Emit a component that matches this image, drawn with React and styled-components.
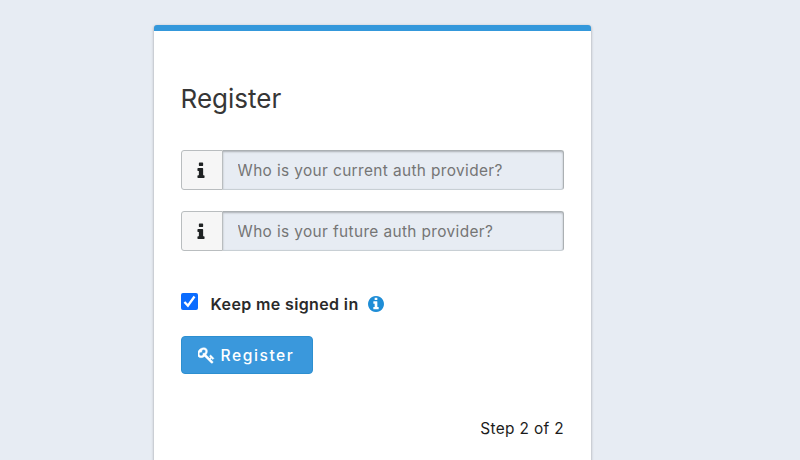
import React from "react";
import styled, { createGlobalStyle } from "styled-components";

const GlobalStyle = createGlobalStyle`
  * { box-sizing: border-box; }
  body {
    margin: 0;
    background: #e7ecf3;
    font-family: Inter, "Liberation Sans", sans-serif;
    color: #1c1c1c;
  }
`;

const Page = styled.main`
  height: 460px;
  overflow: hidden;
  padding: 24.5px 209px 0 153.6px;
`;

const Card = styled.form`
  height: 500px;
  padding: 48px 27px 0;
  background: #fff;
  border-top: 6.5px solid #3498db;
  border-radius: 3px 3px 0 0;
  box-shadow: 0 1px 3px rgba(0, 0, 0, 0.35);
`;

const Title = styled.h1`
  margin: 0 0 31px;
  font-size: 26px;
  line-height: 40px;
  font-weight: 400;
  letter-spacing: 0;
  color: #363636;
`;

const InputGroup = styled.div`
  display: flex;
  width: 383px;
  height: 40.5px;
  margin-bottom: ${(p) => p.$gap}px;
`;

const Addon = styled.span`
  display: flex;
  align-items: center;
  justify-content: center;
  width: 42px;
  padding-right: 1px;
  background: #f6f6f6;
  border: 1px solid #b9bdbf;
  border-radius: 3px 0 0 3px;
  color: #1f2223;
`;

const Input = styled.input`
  flex: 1;
  min-width: 0;
  padding: 1px 15px 0;
  border: 1px solid #c8cfd4;
  border-left: 0;
  border-top-color: #abb0b3;
  border-right-color: #abb0b3;
  border-radius: 0 3px 3px 0;
  background: #e7ecf3;
  box-shadow: inset 0 1px 2px rgba(0, 0, 0, 0.25);
  font: 400 15.4px Inter, "Liberation Sans", sans-serif;
  letter-spacing: 0.38px;
  &::placeholder { color: #757575; opacity: 1; }
`;

const CheckRow = styled.div`
  display: flex;
  align-items: center;
  height: 24px;
  margin-bottom: 20px;
`;

const CheckLabel = styled.label`
  display: flex;
  align-items: center;
  gap: 13px;
  margin-right: 9px;
  font-size: 16px;
  font-weight: 600;
  letter-spacing: 0.37px;
  color: #2a2a2a;
  white-space: nowrap;
`;

const HiddenCheckbox = styled.input`
  appearance: none;
  display: none;
`;

const CheckBox = styled.span`
  display: flex;
  width: 17px;
  height: 17px;
  margin-bottom: 5px;
  border-radius: 2px;
  background: #0a6cff;
`;

const Button = styled.button`
  display: flex;
  align-items: center;
  gap: 6px;
  width: 132px;
  height: 38px;
  padding: 0 16px;
  border: 1px solid #2d8fd0;
  border-radius: 4px;
  background: #3a98dc;
  color: #fff;
  font: 500 15.6px Inter, "Liberation Sans", sans-serif;
  letter-spacing: 1.55px;
`;

const Step = styled.div`
  margin-top: 44px;
  text-align: right;
  font-size: 15.4px;
  line-height: 22px;
  letter-spacing: 0.36px;
`;

const Glyph = styled.svg`
  display: block;
  flex: none;
  fill: currentColor;
  color: ${(p) => p.$color || "inherit"};
`;

const InfoIcon = () => (
  <Glyph width="8" height="18.5" viewBox="0 0 640 1664">
    <path d="M640 1344v128q0 26-19 45t-45 19h-512q-26 0-45-19t-19-45v-128q0-26 19-45t45-19h64v-384h-64q-26 0-45-19t-19-45v-128q0-26 19-45t45-19h384q26 0 45 19t19 45v576h64q26 0 45 19t19 45zM512 192v192q0 26-19 45t-45 19h-256q-26 0-45-19t-19-45v-192q0-26 19-45t45-19h256q26 0 45 19t19 45z" />
  </Glyph>
);

const InfoCircleIcon = () => (
  <Glyph width="16" height="16" viewBox="128 128 1536 1536" $color="#1f8dd6">
    <path d="M1152 1376v-160q0-14-9-23t-23-9h-96v-512q0-14-9-23t-23-9h-320q-14 0-23 9t-9 23v160q0 14 9 23t23 9h96v320h-96q-14 0-23 9t-9 23v160q0 14 9 23t23 9h448q14 0 23-9t9-23zm-128-896v-160q0-14-9-23t-23-9h-192q-14 0-23 9t-9 23v160q0 14 9 23t23 9h192q14 0 23-9t9-23zm640 416q0 209-103 385.5t-279.5 279.5-385.5 103-385.5-103-279.5-279.5-103-385.5 103-385.5 279.5-279.5 385.5-103 385.5 103 279.5 279.5 103 385.5z" />
  </Glyph>
);

const KeyIcon = () => (
  <Glyph width="17" height="17" viewBox="64 64 1728 1728" stroke="currentColor" strokeWidth="40">
    <path d="M832 512q0-80-56-136t-136-56-136 56-56 136q0 42 19 83-41-19-83-19-80 0-136 56t-56 136 56 136 136 56 136-56 56-136q0-42-19-83 41 19 83 19 80 0 136-56t56-136zm851 704q0 17-49 66t-66 49q-9 0-28.5-16t-36.5-33-38.5-40-24.5-26l-96 96 220 220q28 28 28 68 0 42-39 81t-81 39q-40 0-68-28l-671-671q-176 131-365 131-163 0-265.5-102.5t-102.5-265.5q0-160 95-313t248-248 313-95q163 0 265.5 102.5t102.5 265.5q0 189-131 365l355 355 96-96q-3-3-26-24.5t-40-38.5-33-36.5-16-28.5q0-17 49-66t66-49q13 0 23 10 6 6 46 44.5t82 79.5 86.5 86 73 78 28.5 41z" />
  </Glyph>
);

const Field = ({ placeholder, gap }) => (
  <InputGroup $gap={gap}>
    <Addon><InfoIcon /></Addon>
    <Input type="text" placeholder={placeholder} />
  </InputGroup>
);

export default function App() {
  return (
    <>
      <GlobalStyle />
      <Page>
        <Card>
          <Title>Register</Title>
          <Field placeholder="Who is your current auth provider?" gap={20.5} />
          <Field placeholder="Who is your future auth provider?" gap={41} />
          <CheckRow>
            <CheckLabel>
              <HiddenCheckbox type="checkbox" defaultChecked />
              <CheckBox>
                <svg width="17" height="17" viewBox="0 0 17 17" fill="none" stroke="#fff" strokeWidth="2.3">
                  <path d="M3.4 9 L6.9 12.6 L13.5 3.5" />
                </svg>
              </CheckBox>
              Keep me signed in
            </CheckLabel>
            <InfoCircleIcon />
          </CheckRow>
          <Button type="button"><KeyIcon />Register</Button>
          <Step>Step 2 of 2</Step>
        </Card>
      </Page>
    </>
  );
}
